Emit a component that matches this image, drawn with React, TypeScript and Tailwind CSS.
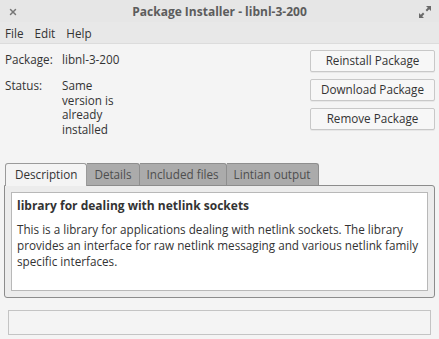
import { X } from "lucide-react";

const tabs = ["Description", "Details", "Included files", "Lintian output"];
const actions = ["Reinstall Package", "Download Package", "Remove Package"];

function ExpandIcon() {
  return (
    <svg width="12" height="12" viewBox="0 0 12 12" className="text-[#6a6a6a]">
      <path d="M7 0h5v5l-1.8-1.8L8 5.4 6.6 4 8.8 1.8z" fill="currentColor" />
      <path d="M0 7v5h5l-1.8-1.8L5.4 8 4 6.6 1.8 8.8z" fill="currentColor" />
    </svg>
  );
}

export default function App() {
  return (
    <div
      className="w-[439px] h-[339px] flex flex-col bg-[#f4f4f4] text-[11.7px] text-[#333] overflow-hidden"
      style={{ fontFamily: '"Open Sans", "Noto Sans", sans-serif' }}
    >
      {/* Title bar */}
      <div className="h-[22px] shrink-0 flex items-center px-[8px] pt-[1px] bg-[#e6e6e6]">
        <X className="w-[10px] h-[10px] text-[#777]" strokeWidth={3.5} />
        <div className="flex-1 text-center font-bold text-[12px] text-[#5c5c5c] pl-[2px]">
          Package Installer - libnl-3-200
        </div>
        <ExpandIcon />
      </div>

      {/* Menu bar */}
      <div className="h-[22px] shrink-0 flex items-center gap-[11px] px-[5px] pt-[2px] bg-[#e8e8e8] border-b border-[#dcdcdc] text-[#333]">
        <span>File</span>
        <span>Edit</span>
        <span>Help</span>
      </div>

      {/* Header */}
      <div className="shrink-0 flex justify-between pl-[5px] pr-[4px] pt-[6px]">
        <div className="flex flex-col gap-[11px] pt-[1px]">
          <div className="flex leading-[16px]">
            <span className="w-[57px]">Package:</span>
            <span>libnl-3-200</span>
          </div>
          <div className="flex leading-[14.7px]">
            <span className="w-[57px]">Status:</span>
            <span className="w-[60px]">
              Same version is already installed
            </span>
          </div>
        </div>
        <div className="flex flex-col gap-[7px] w-[125px]">
          {actions.map((a) => (
            <button
              key={a}
              className="h-[22px] rounded-[2px] border border-[#c8c8c8] bg-[#f7f7f7] text-[#333] shadow-[0_1px_0_rgba(0,0,0,0.05)]"
            >
              {a}
            </button>
          ))}
        </div>
      </div>

      {/* Notebook */}
      <div className="shrink-0 mt-[26px] px-[4px] flex flex-col">
        <div className="flex pl-[1px] h-[22px] items-end">
          {tabs.map((t, i) => (
            <div
              key={t}
              className={
                i === 0
                  ? "h-[23px] px-[9px] flex items-center bg-[#f4f4f4] border border-b-0 border-[#9a9a9a] rounded-t-[3px] text-[#333] relative top-[1px] z-10"
                  : "h-[22px] px-[7px] flex items-center bg-[#ababab] border border-b-0 border-l-0 border-[#8e8e8e] rounded-tr-[3px] text-[#4e4e4e]"
              }
            >
              {t}
            </div>
          ))}
        </div>
        <div className="h-[113px] border border-[#8c8c8c] rounded-b-[3px] rounded-tr-[3px] bg-[#ececec] p-[6px]">
          <div className="h-full bg-white border border-[#b8b8b8] px-[5px] pt-[5px]">
            <div className="font-bold text-[12px] text-[#333] leading-[16px]">
              library for dealing with netlink sockets
            </div>
            <p className="mt-[7px] leading-[16px] text-[#333]">
              This is a library for applications dealing with netlink sockets. The library provides an interface for raw netlink messaging and various netlink family specific interfaces.
            </p>
          </div>
        </div>
      </div>

      {/* Status bar */}
      <div className="shrink-0 mx-[8px] mt-[12px] h-[25px] border border-[#c4c4c4] bg-[#f4f4f4]" />
    </div>
  );
}
